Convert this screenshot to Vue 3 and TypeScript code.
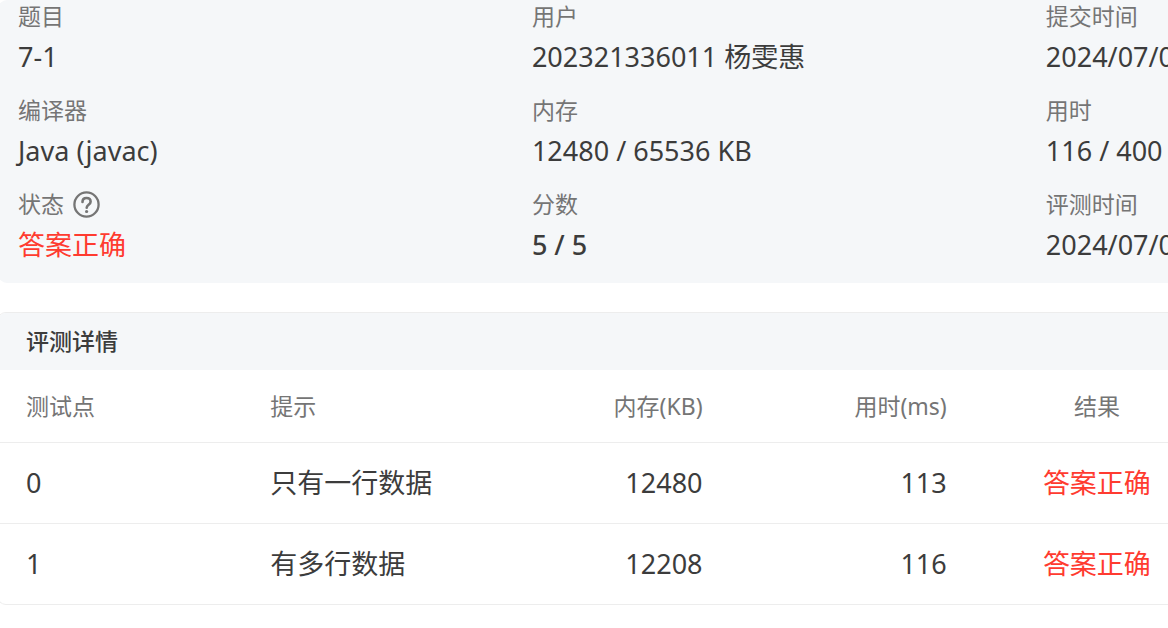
<script setup lang="ts">
interface Field {
  label: string
  value: string
  help?: boolean
  tone?: 'accepted' | 'score'
}

interface TestCase {
  id: number
  hint: string
  memory: number
  time: number
  result: string
}

const fields: Field[] = [
  { label: '题目', value: '7-1' },
  { label: '用户', value: '202321336011 杨雯惠' },
  { label: '提交时间', value: '2024/07/0' },
  { label: '编译器', value: 'Java (javac)' },
  { label: '内存', value: '12480 / 65536 KB' },
  { label: '用时', value: '116 / 400' },
  { label: '状态', value: '答案正确', help: true, tone: 'accepted' },
  { label: '分数', value: '5 / 5', tone: 'score' },
  { label: '评测时间', value: '2024/07/0' },
]

const cases: TestCase[] = [
  { id: 0, hint: '只有一行数据', memory: 12480, time: 113, result: '答案正确' },
  { id: 1, hint: '有多行数据', memory: 12208, time: 116, result: '答案正确' },
]
</script>

<template>
  <main class="page">
    <dl class="summary">
      <div v-for="field in fields" :key="field.label" class="field">
        <dt class="label">
          {{ field.label }}
          <button v-if="field.help" class="help" type="button" aria-label="状态说明">
            <svg viewBox="0 0 27 27" fill="none" stroke="currentColor" aria-hidden="true">
              <circle cx="13.5" cy="13.5" r="12.1" stroke-width="2.3" />
              <path
                d="M9.5 10.9C9.5 8.4 11.1 7 13.5 7s4.1 1.5 4.1 3.7c0 3-3.9 3.2-3.9 6"
                stroke-width="2.6"
                stroke-linecap="round"
              />
              <circle cx="13.6" cy="20.5" r="1.6" fill="currentColor" stroke="none" />
            </svg>
          </button>
        </dt>
        <dd class="value" :class="field.tone">{{ field.value }}</dd>
      </div>
    </dl>

    <section class="details">
      <h2 class="title">评测详情</h2>
      <table class="cases">
        <thead>
          <tr>
            <th scope="col">测试点</th>
            <th scope="col">提示</th>
            <th scope="col" class="number">内存(KB)</th>
            <th scope="col" class="number">用时(ms)</th>
            <th scope="col" class="result">结果</th>
          </tr>
        </thead>
        <tbody>
          <tr v-for="item in cases" :key="item.id">
            <td>{{ item.id }}</td>
            <td>{{ item.hint }}</td>
            <td class="number">{{ item.memory }}</td>
            <td class="number">{{ item.time }}</td>
            <td class="result accepted">{{ item.result }}</td>
          </tr>
        </tbody>
      </table>
    </section>
  </main>
</template>

<style>
body {
  background: #fff;
  overflow: hidden;
}
</style>

<style scoped>
.page {
  display: flex;
  flex-direction: column;
  gap: 29px;
  overflow: hidden;
  color: #3c3c3c;
  font-family: 'Noto Sans', 'Noto Sans CJK SC', sans-serif;
  font-size: 27px;
  line-height: 40px;
  white-space: nowrap;
}

.summary {
  display: grid;
  grid-template-columns: repeat(3, 44vw);
  row-gap: 17px;
  width: calc(100% + 54px);
  box-sizing: border-box;
  margin: 0 0 0 -2px;
  padding: 0 20px 18px;
  border-radius: 9px;
  background: #f5f7f9;
}

.field {
  display: flex;
  flex-direction: column;
  gap: 5px;
}

.label {
  display: flex;
  align-items: center;
  gap: 9px;
  height: 32px;
  color: #757575;
  font-size: 23px;
  line-height: 32px;
}

.value {
  margin: 0;
}

.score {
  font-weight: 500;
}

.accepted {
  color: #ff3b30;
}

.help {
  width: 27px;
  height: 27px;
  padding: 0;
  border: 0;
  background: none;
  color: #757575;
  cursor: pointer;
}

.help svg {
  display: block;
  width: 100%;
  height: 100%;
}

.details {
  width: calc(100% + 55px);
  box-sizing: border-box;
  margin-left: -3px;
  border: 1px solid #ededed;
  border-radius: 9px;
  overflow: hidden;
}

.title {
  margin: 0;
  padding: 8px 28px 9px;
  background: #f5f7f9;
  font-size: 23px;
  font-weight: 500;
}

.cases {
  width: 100%;
  table-layout: fixed;
  border-collapse: separate;
  border-spacing: 0;
}

th,
td {
  padding: 20px 28px;
  text-align: left;
}

th {
  padding: 16px 28px;
  color: #757575;
  font-size: 23px;
  font-weight: 400;
  border-bottom: 1px solid #ededed;
}

tr:not(:last-child) td {
  border-bottom: 1px solid #ededed;
}

th.number,
td.number {
  text-align: right;
}

th.result,
td.result {
  text-align: center;
}
</style>
